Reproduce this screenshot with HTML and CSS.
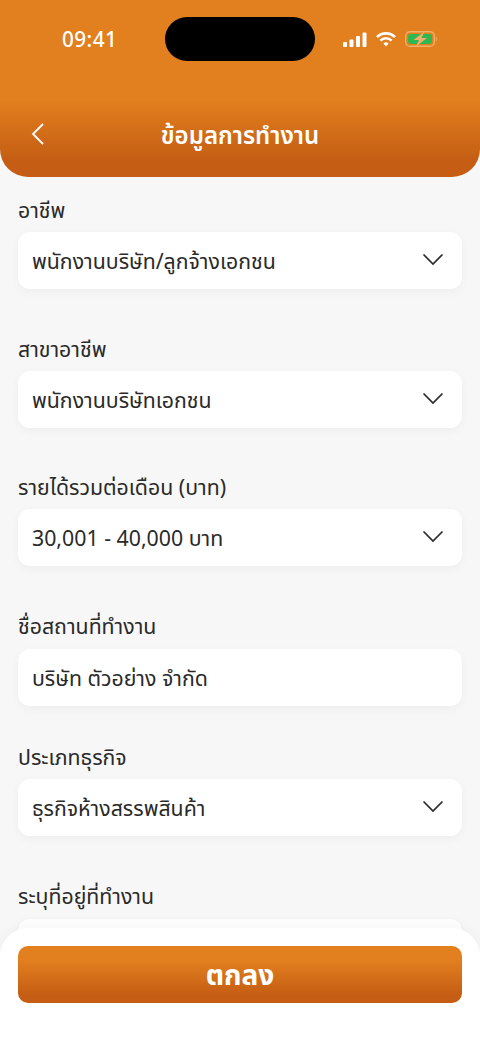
FILE: index.html
```html
<!DOCTYPE html>
<html lang="th">
<head>
<meta charset="utf-8">
<title>ข้อมูลการทำงาน</title>
<link rel="stylesheet" href="styles.css">
</head>
<body>
<div class="screen">
  <header class="header">
    <div class="status">
      <span class="time">09:41</span>
      <span class="island"></span>
      <span class="status-icons">
        <svg width="24" height="15" viewBox="0 0 24 15"><g fill="#fff"><rect x="0" y="10" width="4" height="5" rx="1"/><rect x="6.5" y="7.5" width="4" height="7.5" rx="1"/><rect x="13" y="4" width="4" height="11" rx="1"/><rect x="19.5" y="0.5" width="4" height="14.5" rx="1"/></g></svg>
        <svg width="20" height="15" viewBox="0 0 20 15"><g fill="none" stroke="#fff" stroke-width="2.6"><path d="M1 5.2a12.6 12.6 0 0 1 18 0"/><path d="M4.4 8.6a7.8 7.8 0 0 1 11.2 0"/></g><path d="M7.4 11.5a3.6 3.6 0 0 1 5.2 0L10 14.4z" fill="#fff"/></svg>
        <svg width="33" height="16" viewBox="0 0 33 16"><rect x="0.7" y="0.7" width="28.6" height="14.6" rx="4.4" fill="none" stroke="#eeb06a" stroke-width="1.4"/><rect x="3" y="3" width="24" height="10" rx="2.4" fill="#2fb850"/><path d="M30.8 5.5c1.4.4 1.4 4.6 0 5z" fill="#eeb06a"/><path d="M19.5 0.5 8.5 9h5.5L11 15.5 22 7h-5.5z" fill="#eeb06a"/></svg>
      </span>
    </div>
    <div class="nav">
      <svg class="back" width="14" height="24" viewBox="0 0 14 24"><path d="M12 2 2 12l10 10" fill="none" stroke="#fff" stroke-width="1.8"/></svg>
      <h1 class="title">ข้อมูลการทำงาน</h1>
    </div>
  </header>

  <main class="form">
    <div class="group">
      <div class="label">อาชีพ</div>
      <div class="field"><span>พนักงานบริษัท/ลูกจ้างเอกชน</span><svg class="chev" width="22" height="13" viewBox="0 0 22 13"><path d="m1.5 1.5 9.5 9.5 9.5-9.5" fill="none" stroke="#2b2b2b" stroke-width="1.7"/></svg></div>
    </div>
    <div class="group group-tight">
      <div class="label">สาขาอาชีพ</div>
      <div class="field"><span>พนักงานบริษัทเอกชน</span><svg class="chev" width="22" height="13" viewBox="0 0 22 13"><path d="m1.5 1.5 9.5 9.5 9.5-9.5" fill="none" stroke="#2b2b2b" stroke-width="1.7"/></svg></div>
    </div>
    <div class="group">
      <div class="label">รายได้รวมต่อเดือน (บาท)</div>
      <div class="field"><span>30,001 - 40,000 บาท</span><svg class="chev" width="22" height="13" viewBox="0 0 22 13"><path d="m1.5 1.5 9.5 9.5 9.5-9.5" fill="none" stroke="#2b2b2b" stroke-width="1.7"/></svg></div>
    </div>
    <div class="group group-text group-wide">
      <div class="label">ชื่อสถานที่ทำงาน</div>
      <div class="field"><span>บริษัท ตัวอย่าง จำกัด</span></div>
    </div>
    <div class="group">
      <div class="label">ประเภทธุรกิจ</div>
      <div class="field"><span>ธุรกิจห้างสรรพสินค้า</span><svg class="chev" width="22" height="13" viewBox="0 0 22 13"><path d="m1.5 1.5 9.5 9.5 9.5-9.5" fill="none" stroke="#2b2b2b" stroke-width="1.7"/></svg></div>
    </div>
    <div class="group group-wide">
      <div class="label">ระบุที่อยู่ที่ทำงาน</div>
      <div class="field"></div>
    </div>
  </main>

  <footer class="sheet">
    <button class="cta">ตกลง</button>
  </footer>
</div>
</body>
</html>
```

FILE: styles.css
```css
* { box-sizing: border-box; }
html, body { margin: 0; padding: 0; }
body {
  width: 480px;
  height: 1044px;
  overflow: hidden;
  font-family: "Noto Sans", "Noto Sans Thai", "DejaVu Sans", "Liberation Sans", sans-serif;
  color: #2a2a2a;
  background: #f7f7f7;
}
.screen {
  position: relative;
  width: 480px;
  height: 1044px;
  overflow: hidden;
  display: flex;
  flex-direction: column;
}
.header {
  height: 177px;
  flex: none;
  display: flex;
  flex-direction: column;
  border-radius: 0 0 28px 28px;
  background: linear-gradient(180deg, #e27f1e 0, #e27f1e 100px, #c55e14 160px, #c55e14 177px);
}
.status {
  display: flex;
  align-items: center;
  height: 44px;
  margin-top: 17px;
  padding: 0 42px 0 62px;
}
.time {
  width: 103px;
  color: #fff;
  font-size: 20.8px;
  font-weight: 500;
  letter-spacing: 0.4px;
}
.island {
  width: 150px;
  height: 44px;
  border-radius: 22px;
  background: #000;
}
.status-icons {
  display: flex;
  align-items: center;
  gap: 9px;
  margin-left: auto;
}
.nav {
  position: relative;
  display: flex;
  justify-content: center;
  align-items: center;
  height: 40px;
  margin-top: 54px;
}
.back {
  position: absolute;
  left: 31px;
  top: 7px;
}
.title {
  margin: 0;
  color: #fff;
  font-size: 24px;
  line-height: 30px;
  font-weight: 600;
}
.form {
  display: flex;
  flex-direction: column;
  gap: 47px;
  padding: 20px 18px 0;
}
.label {
  height: 28px;
  line-height: 26px;
  font-size: 21.3px;
  margin-bottom: 7px;
}
.field {
  display: flex;
  justify-content: space-between;
  align-items: center;
  height: 57px;
  padding: 3px 18px 0 14px;
  font-size: 21.3px;
  background: #fff;
  border-radius: 12px;
  box-shadow: 0 3px 10px rgba(0, 0, 0, 0.04);
}
.chev { margin-top: -6px; }
.group-tight { margin-bottom: -1px; }
.group-wide .label { margin-bottom: 8px; }
.group-text { margin-bottom: -9px; }
.sheet {
  position: absolute;
  left: 0;
  right: 0;
  bottom: 0;
  height: 116px;
  padding: 18px 18px 0;
  background: #fff;
  border-radius: 28px 28px 0 0;
  box-shadow: 0 -4px 12px rgba(0, 0, 0, 0.03);
}
.cta {
  display: block;
  width: 100%;
  height: 57px;
  padding: 3px 0 0;
  border: 0;
  border-radius: 10px;
  color: #fff;
  font-family: inherit;
  font-size: 28px;
  font-weight: 700;
  background: linear-gradient(180deg, #e27f1e 0, #e27f1e 25%, #c55e14 85%, #c55e14 100%);
}
```
